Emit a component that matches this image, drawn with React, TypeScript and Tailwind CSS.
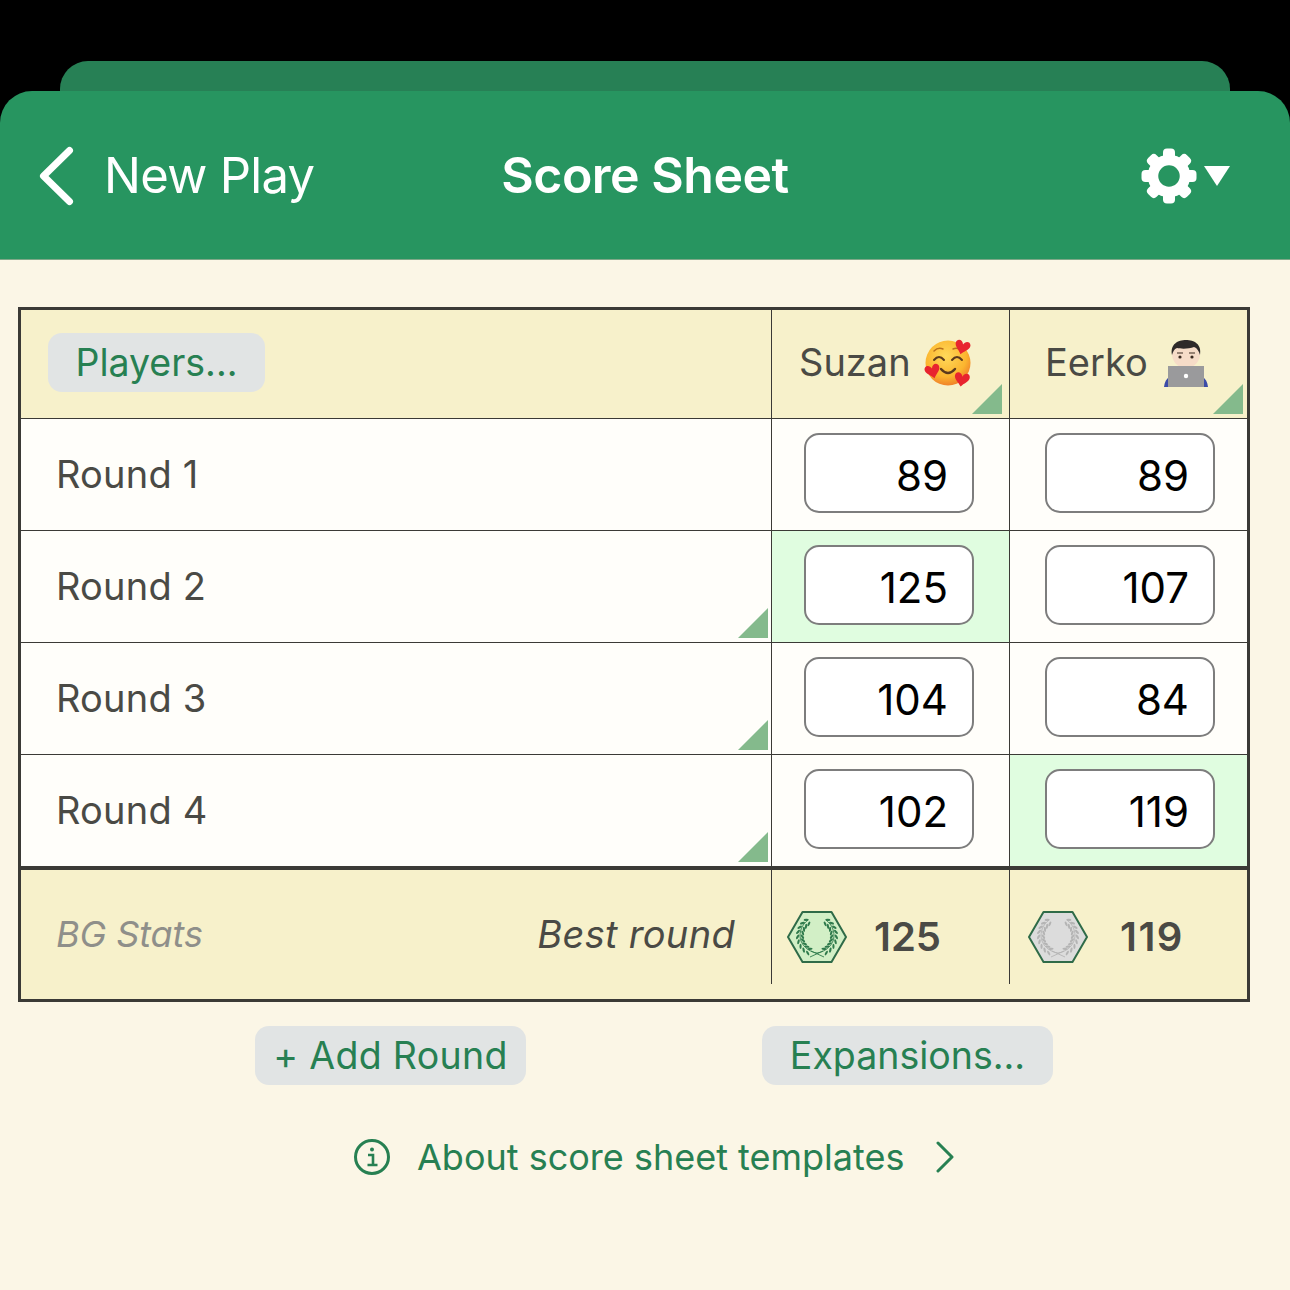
const rounds = [
  { name: 'Round 1', a: '89', b: '89', note: false, best: '' },
  { name: 'Round 2', a: '125', b: '107', note: true, best: 'a' },
  { name: 'Round 3', a: '104', b: '84', note: true, best: '' },
  { name: 'Round 4', a: '102', b: '119', note: true, best: 'b' },
]

function Corner({ className }: { className: string }) {
  return (
    <svg viewBox="0 0 30 30" className={`absolute w-[30px] h-[30px] ${className}`}>
      <path d="M30 0V30H0Z" fill="#84ba8c" />
    </svg>
  )
}

function Gear() {
  return (
    <svg viewBox="0 0 56 56" className="w-[56px] h-[56px]">
      <circle cx="28" cy="28" r="16" fill="none" stroke="#fff" strokeWidth="10.5" />
      {[0, 45, 90, 135, 180, 225, 270, 315].map((deg) => (
        <rect key={deg} x="22" y="0.5" width="12" height="12" rx="4" fill="#fff" transform={`rotate(${deg} 28 28)`} />
      ))}
    </svg>
  )
}

function HeartFace() {
  const heart = 'M0 3C-1-1-6-1-6 3-6 6-2 8 0 11 2 8 6 6 6 3 6-1 1-1 0 3Z'
  return (
    <svg viewBox="0 0 50 50" className="w-[50px] h-[50px] mt-[1px]">
      <defs>
        <radialGradient id="face" cx="45%" cy="35%" r="65%">
          <stop offset="0%" stopColor="#ffd95a" />
          <stop offset="70%" stopColor="#fbb52f" />
          <stop offset="100%" stopColor="#f0822a" />
        </radialGradient>
      </defs>
      <circle cx="25" cy="25" r="22.5" fill="url(#face)" />
      <path d="M11 22Q16 16 21 22M29 22Q34 16 39 22" fill="none" stroke="#5c3a1c" strokeWidth="2" strokeLinecap="round" />
      <path d="M11 13Q15 9 20 11M30 11Q35 9 39 13" fill="none" stroke="#b9701c" strokeWidth="1.5" strokeLinecap="round" />
      <path d="M18 31Q25 39 32 31" fill="none" stroke="#5c3a1c" strokeWidth="2.4" strokeLinecap="round" />
      <path d={heart} transform="translate(41 3) rotate(15) scale(1.25)" fill="#e8242f" />
      <path d={heart} transform="translate(8 27) rotate(-15) scale(1.25)" fill="#e8242f" />
      <path d={heart} transform="translate(40 35) rotate(10) scale(1.25)" fill="#e8242f" />
    </svg>
  )
}

function Technologist() {
  return (
    <svg viewBox="0 0 44 48" className="w-[44px] h-[48px] mt-[3px]">
      <path d="M0 47C1 37 8 33 22 33S43 37 44 47Z" fill="#3b4ba8" />
      <path d="M17 24H27V32H17Z" fill="#eccdb4" />
      <ellipse cx="22" cy="14" rx="14" ry="14" fill="#f6dcc8" />
      <path d="M8 15C6 4 14 0 22 0S38 4 36 15C35 11 33 8 30 7 25 9 17 9 13 8 10 9 9 12 8 15Z" fill="#2e2a2a" />
      <path d="M13 13H19M25 13H31" stroke="#3a2a20" strokeWidth="1" />
      <circle cx="16" cy="17" r="1.6" fill="#3a2a20" />
      <circle cx="28" cy="17" r="1.6" fill="#3a2a20" />
      <path d="M4 26H40V47H4Z" fill="#9a9a9c" />
      <circle cx="22" cy="36" r="2.2" fill="#fff" />
    </svg>
  )
}

function Badge({ fill, leaf }: { fill: string; leaf: string }) {
  const leaves = [0, 1, 2, 3, 4, 5, 6, 7, 8]
  const pairs = leaves.flatMap((i) => {
    const t = 0.5 + (i / 8) * 2.05
    const deg = (t * 180) / Math.PI
    return [-1, 1].map((side) => {
      const r = 17 + side * 2.4
      return { x: 30 - r * Math.sin(t), y: 25 + r * Math.cos(t), deg: deg + side * 32 + 90, key: `${i}${side}` }
    })
  })
  return (
    <svg viewBox="0 0 60 52" className="w-[60px] h-[52px]">
      <path d="M15.5 1H44.5L59 26 44.5 51H15.5L1 26Z" fill={fill} stroke="#2f6b48" strokeWidth="2" strokeLinejoin="round" />
      <path d="M30 42C22 41 13 34 13 25 13 18 16 13 21 9M30 42C38 41 47 34 47 25 47 18 44 13 39 9M23 46 36 40M37 46 24 40" fill="none" stroke={leaf} strokeWidth="0.9" />
      {pairs.map((p) => (
        <g key={p.key}>
          <ellipse cx={p.x} cy={p.y} rx="1.1" ry="2.6" fill={leaf} transform={`rotate(${p.deg} ${p.x} ${p.y})`} />
          <ellipse cx={60 - p.x} cy={p.y} rx="1.1" ry="2.6" fill={leaf} transform={`rotate(${-p.deg} ${60 - p.x} ${p.y})`} />
        </g>
      ))}
    </svg>
  )
}

function ScoreInput({ value, best, last }: { value: string; best: boolean; last: boolean }) {
  return (
    <div className={`flex items-center pb-[4px] ${last ? 'w-[237px] pl-[35px]' : 'w-[238px] pl-[32px] border-r border-[#3b3a36]'} ${best ? 'bg-[#e0fde0]' : ''}`}>
      <div className="w-[170px] h-[80px] rounded-[15px] border-2 border-[#7d7d7d] bg-white flex items-center justify-end pr-[24px] pt-[6px] text-[42px] text-black">
        {value}
      </div>
    </div>
  )
}

function PillButton({ children, width }: { children: string; width: string }) {
  return (
    <div className={`h-[59px] rounded-[14px] bg-[#e1e4e4] flex items-center justify-center pt-[2px] text-[37.5px] text-[#278052] whitespace-nowrap ${width}`}>
      {children}
    </div>
  )
}

export default function App() {
  return (
    <div className="w-[1290px] h-[1290px] bg-black flex flex-col pt-[61px] font-['Inter','Liberation_Sans',sans-serif] overflow-hidden">
      <div className="mx-[60px] h-[30px] shrink-0 rounded-t-[28px] bg-[#278055]" />

      <header className="h-[169px] shrink-0 rounded-t-[32px] bg-[#279560] border-b border-[#7fa888] grid grid-cols-3 items-center px-[36px] pt-[2px]">
        <div className="flex items-center gap-[28px] text-white text-[49px]">
          <svg viewBox="0 0 40 64" className="w-[40px] h-[64px]">
            <path d="M33.5 6.5 7.5 32 33.5 57.5" fill="none" stroke="#fff" strokeWidth="7" strokeLinecap="round" strokeLinejoin="round" />
          </svg>
          <span className="tracking-[-0.7px]">New Play</span>
        </div>
        <div className="text-center text-white text-[50px] font-semibold tracking-[-0.5px] whitespace-nowrap -mt-[2px]">Score Sheet</div>
        <div className="flex items-center justify-end gap-[7px] pr-[24px]">
          <Gear />
          <svg viewBox="0 0 26 20" className="w-[26px] h-[20px]">
            <path d="M0 0H26L13 20Z" fill="#fff" />
          </svg>
        </div>
      </header>

      <main className="flex-1 bg-[#fbf6e6] pt-[47px] pl-[18px]">
        <div className="w-[1232px] h-[695px] border-[3px] border-[#3b3a36] text-[#4a4a45]">
          <div className="h-[109px] flex bg-[#f7f1cb] border-b border-[#3b3a36] pb-[4px]">
            <div className="w-[751px] border-r border-[#3b3a36] -mb-[4px] pb-[4px] pl-[27px] flex items-center">
              <PillButton width="w-[217px]">Players...</PillButton>
            </div>
            <div className="relative w-[238px] border-r border-[#3b3a36] -mb-[4px] pb-[4px] pl-[27px] flex items-center gap-[12px] text-[38px]">
              <span>Suzan</span>
              <HeartFace />
              <Corner className="right-[7px] bottom-[4px]" />
            </div>
            <div className="relative w-[237px] -mb-[4px] pb-[4px] pl-[35px] flex items-center gap-[16px] text-[38px]">
              <span>Eerko</span>
              <Technologist />
              <Corner className="right-[4px] bottom-[4px]" />
            </div>
          </div>

          {rounds.map((round, i) => (
            <div key={round.name} className={`flex ${i === 3 ? 'h-[111px]' : 'h-[112px] border-b border-[#3b3a36]'} bg-[#fffefa]`}>
              <div className="relative w-[751px] border-r border-[#3b3a36] pl-[35px] flex items-center text-[38px] tracking-[0.2px]">
                {round.name}
                {round.note && <Corner className="right-[3px] bottom-[4px]" />}
              </div>
              <ScoreInput value={round.a} best={round.best === 'a'} last={false} />
              <ScoreInput value={round.b} best={round.best === 'b'} last />
            </div>
          ))}

          <div className="h-[133px] border-t-4 border-[#3b3a36] bg-[#f7f1cb] flex items-start">
            <div className="w-[751px] h-[114px] border-r border-[#3b3a36] px-[36px] flex items-center justify-between italic pt-[14px]">
              <span className="text-[36px] text-[#8f8f8a] -ml-[1px] tracking-[-0.1px]">BG Stats</span>
              <span className="text-[38px] tracking-[0.3px]">Best round</span>
            </div>
            <div className="w-[238px] h-[114px] border-r border-[#3b3a36] pl-[15px] flex items-center gap-[27px] pt-[19px]">
              <Badge fill="#d2efc6" leaf="#2f7a4c" />
              <span className="text-[40px] font-semibold">125</span>
            </div>
            <div className="w-[237px] h-[114px] pl-[18px] flex items-center gap-[32px] pt-[19px]">
              <Badge fill="#dcdcdc" leaf="#b4b4b4" />
              <span className="text-[40px] font-semibold tracking-[1.5px]">119</span>
            </div>
          </div>
        </div>

        <div className="mt-[24px] flex pl-[237px] gap-[236px]">
          <PillButton width="w-[271px] tracking-[0.3px]">+ Add Round</PillButton>
          <PillButton width="w-[291px]">Expansions...</PillButton>
        </div>

        <div className="mt-[45px] flex items-center text-[#278052] pl-[335px] text-[36px]">
          <svg viewBox="0 0 38 38" className="w-[38px] h-[38px]">
            <circle cx="19" cy="19" r="16.5" fill="none" stroke="#278052" strokeWidth="3" />
            <circle cx="19" cy="11.5" r="2" fill="#278052" />
            <path d="M15 17H20V27M14.5 27H24.5" fill="none" stroke="#278052" strokeWidth="2.6" />
          </svg>
          <span className="ml-[26px] whitespace-nowrap">About score sheet templates</span>
          <svg viewBox="0 0 20 32" className="ml-[31px] w-[20px] h-[32px]">
            <path d="M3 2 17 16 3 30" fill="none" stroke="#278052" strokeWidth="3" strokeLinecap="round" strokeLinejoin="round" />
          </svg>
        </div>
      </main>
    </div>
  )
}
